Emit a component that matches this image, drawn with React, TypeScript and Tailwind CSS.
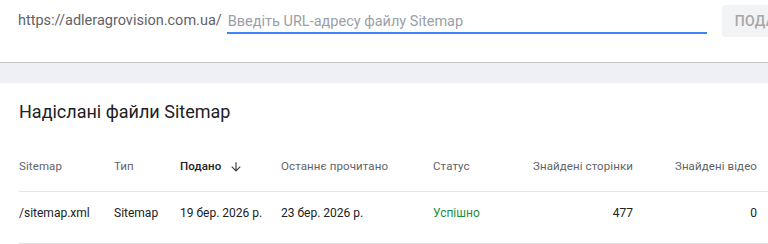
import React from "react";

const cols = "grid grid-cols-[95px_66px_101px_152px_100px_100px_124px]";

export default function App() {
  return (
    <div className="w-[768px] h-[244px] overflow-hidden bg-white font-['Roboto',sans-serif]">
      {/* submit bar */}
      <div className="h-[63px] flex items-start pl-[18px] border-b border-[#c6c6c6] shadow-[0_1px_2px_rgba(0,0,0,0.12)]">
        <div className="flex items-end h-[34px]">
          <span className="text-[14.5px] leading-[20px] pb-[3px] text-[#5f6368] pr-[5px]">https://adleragrovision.com.ua/</span>
          <div className="w-[480px] h-[34px] border-b-2 border-[#4285f4] flex items-end">
            <span className="text-[14.5px] leading-[20px] text-[#9aa0a6] pl-[1px]">Введіть URL-адресу файлу Sitemap</span>
          </div>
        </div>
        <button className="ml-[15px] mt-[5px] h-[32px] px-[13px] rounded bg-[#f1f3f4] text-[14px] font-medium tracking-wide text-[#a6a6a6] whitespace-nowrap">
          ПОДАТИ
        </button>
      </div>
      <div className="h-[20px] bg-[#eef0f5]" />

      {/* submitted sitemaps */}
      <div className="bg-white">
        <h2 className="pl-[19px] pt-[17px] text-[18px] leading-[24px] text-[#202124]">Надіслані файли Sitemap</h2>
        <div className="mt-[18px] pl-[19px]">
          <div className={`${cols} h-[50px] items-center text-[11.5px] tracking-[0.1px] text-[#5f6368] border-b border-[#e3e3e3] whitespace-nowrap`}>
            <span>Sitemap</span>
            <span>Тип</span>
            <span className="flex items-center gap-[8px] font-medium text-[#202124]">
              Подано
              <svg width="14" height="14" viewBox="0 0 24 24" fill="#3c4043">
                <path d="M20 12l-1.41-1.41L13 16.17V4h-2v12.17l-5.58-5.59L4 12l8 8 8-8z" />
              </svg>
            </span>
            <span>Останнє прочитано</span>
            <span>Статус</span>
            <span className="text-right">Знайдені сторінки</span>
            <span className="text-right">Знайдені відео</span>
          </div>
          <div className={`${cols} h-[52px] items-start pt-[13px] text-[12px] leading-[16px] text-[#202124] border-b border-[#e3e3e3] whitespace-nowrap`}>
            <span>/sitemap.xml</span>
            <span>Sitemap</span>
            <span>19 бер. 2026 р.</span>
            <span>23 бер. 2026 р.</span>
            <span className="text-[#1e8e3e]">Успішно</span>
            <span className="text-right">477</span>
            <span className="text-right">0</span>
          </div>
        </div>
      </div>
    </div>
  );
}
